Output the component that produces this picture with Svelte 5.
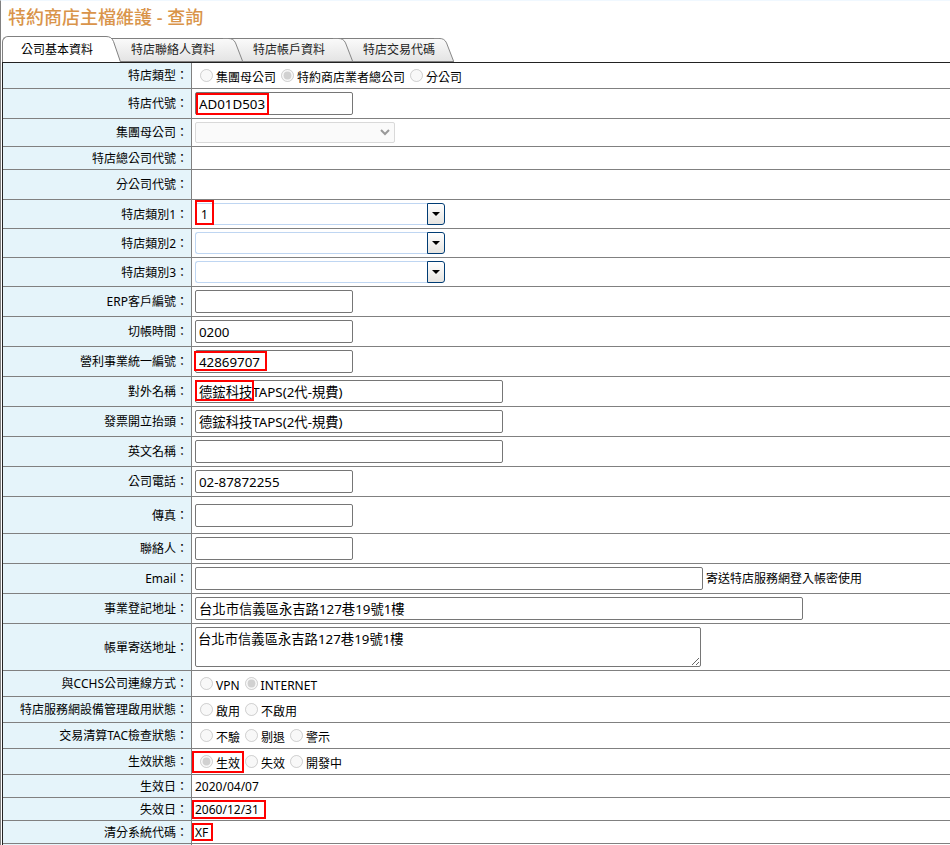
<script>
  const tabs = ['公司基本資料', '特店聯絡人資料', '特店帳戶資料', '特店交易代碼'];
  let active = $state(0);

  const rows = [
    { label: '特店類型', size: 'radio', kind: 'radios', options: ['集團母公司', '特約商店業者總公司', '分公司'], checked: 1 },
    { label: '特店代號', size: 'field', kind: 'input', width: 'short', value: 'AD01D503', mark: [4, 4, 73, 22] },
    { label: '集團母公司', size: 'select', kind: 'select' },
    { label: '特店總公司代號', size: 'text', kind: 'text', value: '' },
    { label: '分公司代號', size: 'field', kind: 'text', value: '' },
    { label: '特店類別1', size: 'combo', kind: 'combo', value: '1', mark: [3, 0, 19, 25] },
    { label: '特店類別2', size: 'combo', kind: 'combo', value: '' },
    { label: '特店類別3', size: 'combo', kind: 'combo', value: '' },
    { label: 'ERP客戶編號', size: 'field', kind: 'input', width: 'short', value: '' },
    { label: '切帳時間', size: 'field', kind: 'input', width: 'short', value: '0200' },
    { label: '營利事業統一編號', size: 'field', kind: 'input', width: 'short', value: '42869707', mark: [2, 4, 73, 20] },
    { label: '對外名稱', size: 'field', kind: 'input', width: 'medium', value: '德鋐科技TAPS(2代-規費)', mark: [3, 3, 59, 21] },
    { label: '發票開立抬頭', size: 'field', kind: 'input', width: 'medium', value: '德鋐科技TAPS(2代-規費)' },
    { label: '英文名稱', size: 'field', kind: 'input', width: 'medium', value: '' },
    { label: '公司電話', size: 'field', kind: 'input', width: 'short', value: '02-87872255' },
    { label: '傳真', size: 'tall', kind: 'input', width: 'short', value: '' },
    { label: '聯絡人', size: 'field', kind: 'input', width: 'short', value: '' },
    { label: 'Email', size: 'field', kind: 'input', width: 'long', value: '', note: '寄送特店服務網登入帳密使用' },
    { label: '事業登記地址', size: 'field', kind: 'input', width: 'full', value: '台北市信義區永吉路127巷19號1樓' },
    { label: '帳單寄送地址', size: 'area', kind: 'textarea', value: '台北市信義區永吉路127巷19號1樓' },
    { label: '與CCHS公司連線方式', size: 'radio', kind: 'radios', options: ['VPN', 'INTERNET'], checked: 1 },
    { label: '特店服務網設備管理啟用狀態', size: 'radio', kind: 'radios', options: ['啟用', '不啟用'], checked: -1 },
    { label: '交易清算TAC檢查狀態', size: 'radio', kind: 'radios', options: ['不驗', '剔退', '警示'], checked: -1 },
    { label: '生效狀態', size: 'radio', kind: 'radios', options: ['生效', '失效', '開發中'], checked: 0, mark: [0, 2, 52, 22] },
    { label: '生效日', size: 'text', kind: 'text', value: '2020/04/07' },
    { label: '失效日', size: 'text', kind: 'text', value: '2060/12/31', mark: [0, 2, 74, 19] },
    { label: '清分系統代碼', size: 'text', kind: 'text', value: 'XF', mark: [0, 2, 21, 18] }
  ];
</script>

<main class="page">
  <h1>特約商店主檔維護 - 查詢</h1>

  <div class="tabs" role="tablist">
    {#each tabs as tab, i}
      <button
        type="button"
        role="tab"
        class="tab"
        class:active={active === i}
        aria-selected={active === i}
        style="z-index: {active === i ? 10 : tabs.length - i}"
        onclick={() => (active = i)}
      >
        <span class="body"></span>
        <svg class="cap" viewBox="0 0 20 26" preserveAspectRatio="none" aria-hidden="true">
          <defs>
            <linearGradient id="cap{i}" x1="0" y1="0" x2="0" y2="1">
              <stop offset="0" stop-color={active === i ? '#fff' : '#fafafa'} />
              <stop offset="1" stop-color={active === i ? '#fff' : '#e4e4e4'} />
            </linearGradient>
          </defs>
          <path d="M0 0.5H5C9 0.5 11 2 12.5 5.5L19.5 26H0Z" fill="url(#cap{i})" />
          <path d="M0 0.5H5C9 0.5 11 2 12.5 5.5L19.5 26" fill="none" stroke="#808080" />
        </svg>
        <span class="name">{tab}</span>
      </button>
    {/each}
  </div>

  <table>
    <tbody>
      {#each rows as row, r}
        <tr class={row.size}>
          <th scope="row">
            {#if row.kind === 'radios' || row.kind === 'text'}
              <span id="label{r}">{row.label}：</span>
            {:else}
              <label for="field{r}">{row.label}：</label>
            {/if}
          </th>
          <td>
            <div class="content">
              {#if row.kind === 'input'}
                <input id="field{r}" class="box {row.width}" type="text" value={row.value} />
                {#if row.note}<span class="note">{row.note}</span>{/if}
              {:else if row.kind === 'textarea'}
                <textarea id="field{r}" class="box" value={row.value}></textarea>
              {:else if row.kind === 'select'}
                <span class="select">
                  <select id="field{r}" disabled><option></option></select>
                  <svg viewBox="0 0 10 7" aria-hidden="true"><path d="M1 1L5 5L9 1" /></svg>
                </span>
              {:else if row.kind === 'combo'}
                <input id="field{r}" class="combo-input" type="text" value={row.value} />
                <button type="button" class="combo-button" aria-label={row.label}>
                  <svg viewBox="0 0 8 4" aria-hidden="true"><path d="M0 0H8L4 4Z" /></svg>
                </button>
              {:else if row.kind === 'radios'}
                {#each row.options as option, o}
                  <label class="radio-label">
                    <input type="radio" name="group{r}" checked={row.checked === o} disabled />
                    <span>{option}</span>
                  </label>
                {/each}
              {:else}
                <span>{row.value}</span>
              {/if}
            </div>
            {#if row.mark}
              <span
                class="mark"
                style="left: {row.mark[0]}px; top: {row.mark[1]}px; width: {row.mark[2]}px; height: {row.mark[3]}px"
              ></span>
            {/if}
          </td>
        </tr>
      {/each}
      <tr class="end"><th></th><td></td></tr>
    </tbody>
  </table>
</main>

<style>
  :global(body) {
    background: #fff;
  }

  .page,
  .page input,
  .page textarea,
  .page select {
    font-family: 'Noto Sans', 'Noto Sans CJK TC', sans-serif;
    color: #000;
  }

  .page {
    box-sizing: border-box;
    border-top: 1px solid #f0f8ff;
    border-left: 1px solid #808080;
    padding-left: 1px;
    font-size: 12px;
    line-height: 16px;
  }

  h1 {
    margin: 0;
    padding: 4px 0 7px 6px;
    color: #d9944a;
    font-size: 18px;
    line-height: 24px;
    font-weight: 500;
  }

  .tabs {
    display: flex;
    align-items: flex-end;
    height: 26px;
  }

  .tab {
    position: relative;
    height: 24px;
    margin: 0 0 0 -14px;
    padding: 0 28px 0 24px;
    border: 0;
    background: none;
    color: #222;
    font: inherit;
    cursor: pointer;
  }

  .tab:first-child {
    margin-left: 0;
    padding-left: 19px;
  }

  .tab:last-child {
    padding-right: 19px;
  }

  .tab.active {
    height: 26px;
    padding-top: 2px;
    color: #000;
  }

  .body {
    position: absolute;
    inset: 0 20px 0 0;
    border-top: 1px solid #808080;
    background: linear-gradient(#fafafa, #e4e4e4);
  }

  .tab:first-child .body {
    border-left: 1px solid #808080;
    border-top-left-radius: 6px;
  }

  .tab:not(.active) .body {
    border-bottom: 1px solid #808080;
  }

  .active .body {
    background: #fff;
  }

  .cap {
    position: absolute;
    top: 0;
    right: 0;
    width: 20px;
    height: 100%;
  }

  .tab:not(.active) .cap {
    box-sizing: border-box;
    border-bottom: 1px solid #808080;
  }

  .name {
    position: relative;
  }

  table {
    width: 100%;
    table-layout: fixed;
    border-spacing: 0;
    border-top: 1px solid #222;
    border-left: 1px solid #222;
  }

  th,
  td {
    box-sizing: border-box;
    padding: 0;
    border-bottom: 1px solid #808080;
    vertical-align: middle;
  }

  th {
    width: 189px;
    padding: 1px 3px 0 0;
    border-right: 1px solid #808080;
    background: #e5f4fa;
    font-weight: 400;
    text-align: right;
    white-space: nowrap;
  }

  td {
    position: relative;
    padding-left: 3px;
  }

  .text td {
    padding-top: 1px;
  }

  .radio { height: 26px; }
  .field { height: 30px; }
  .select:where(tr) { height: 28px; }
  .text { height: 23px; }
  .combo { height: 29px; }
  .tall { height: 37px; }
  .area { height: 47px; }

  .end th,
  .end td {
    height: 1px;
    border-bottom: 0;
  }

  .content {
    display: flex;
    align-items: center;
  }

  .box {
    box-sizing: border-box;
    height: 23px;
    margin: 0;
    padding: 0 3px;
    border: 1px solid #767676;
    border-radius: 2px;
    background: #fff;
  }

  .short { width: 158px; }
  .medium { width: 308px; }
  .long { width: 508px; }
  .full { width: 608px; }

  textarea.box {
    width: 506px;
    height: 40px;
    padding: 2px;
    line-height: 18px;
  }

  .note {
    margin-left: 3px;
  }

  span.select {
    position: relative;
    display: flex;
  }

  select {
    box-sizing: border-box;
    width: 200px;
    height: 21px;
    margin: 0;
    border: 1px solid #d9d9d9;
    border-radius: 2px;
    background: #fafafa;
    appearance: none;
    opacity: 1;
  }

  span.select svg {
    position: absolute;
    top: 7px;
    right: 5px;
    width: 10px;
    height: 7px;
    fill: none;
    stroke: #999;
    stroke-width: 2;
  }

  .combo-input {
    box-sizing: border-box;
    width: 232px;
    height: 22px;
    margin: 0;
    padding: 0 5px;
    border: 1px solid #bfd6f2;
    border-right: 0;
    border-radius: 3px 0 0 3px;
    background: #fff;
    font-size: 12px;
  }

  .combo-button {
    box-sizing: border-box;
    display: flex;
    align-items: center;
    justify-content: center;
    width: 18px;
    height: 22px;
    padding: 0;
    border: 1px solid #003c74;
    border-radius: 0 3px 3px 0;
    background: linear-gradient(#fff, #e6e4e0);
  }

  .combo-button svg {
    width: 8px;
    height: 4px;
  }

  .radio-label {
    display: flex;
    align-items: center;
  }

  .radio-label input {
    width: 13px;
    height: 13px;
    margin: 0 3px 0 5px;
  }

  .radio-label span {
    padding-top: 4px;
  }

  .mark {
    position: absolute;
    box-sizing: border-box;
    border: 2px solid #f00;
    pointer-events: none;
  }
</style>
